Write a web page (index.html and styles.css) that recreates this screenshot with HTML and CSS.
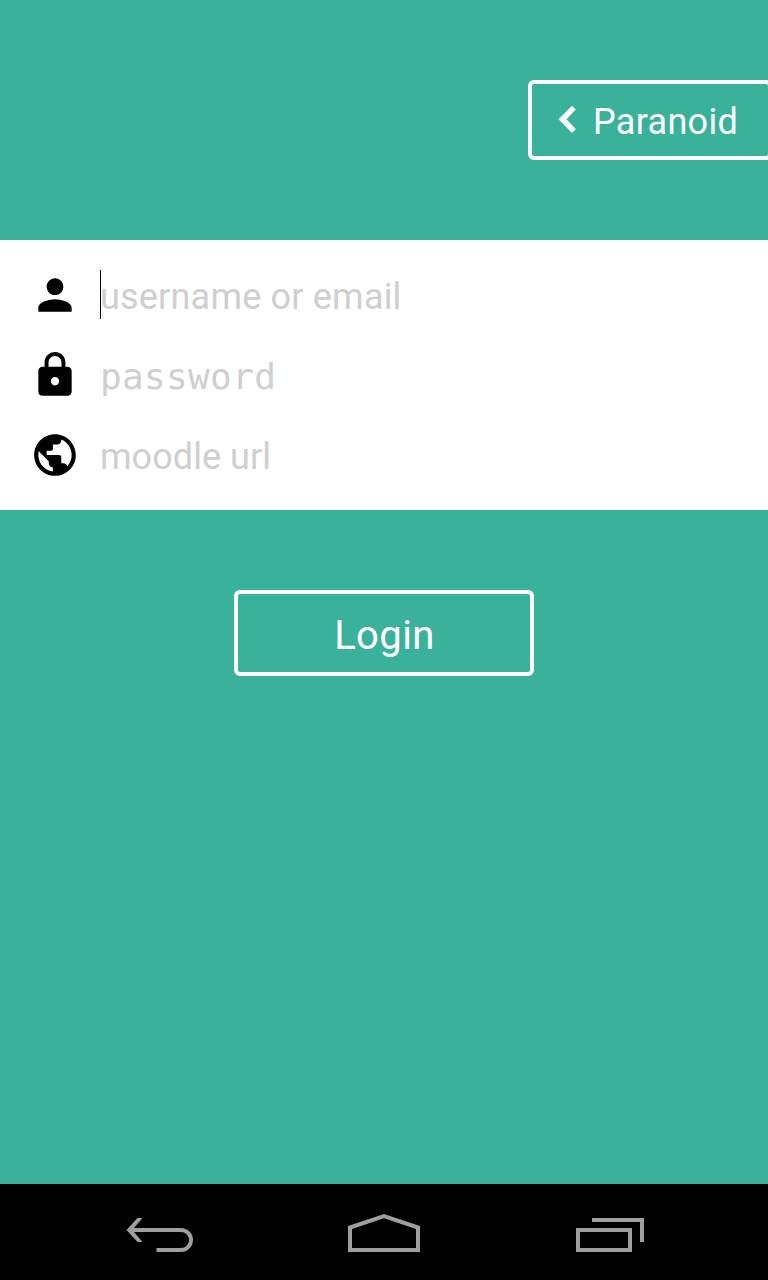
FILE: index.html
```html
<!DOCTYPE html>
<html lang="en">
<head>
<meta charset="utf-8">
<title>Login</title>
<link rel="stylesheet" href="styles.css">
</head>
<body>
<div class="screen">
  <header class="top">
    <div class="mode">
      <svg class="mode-icon" viewBox="0 0 18 28"><path d="M14 .7L17.800 4.500 8.400 14.300l9.400 9.800L14 28 .5 14.300z"/></svg>
      <span class="mode-label">Paranoid</span>
    </div>
  </header>
  <main class="form">
    <div class="row">
      <svg class="icon" viewBox="0 0 24 24"><path d="M12 12c2.21 0 4-1.79 4-4s-1.79-4-4-4-4 1.79-4 4 1.79 4 4 4zm0 2c-2.67 0-8 1.34-8 4v2h16v-2c0-2.66-5.33-4-8-4z"/></svg>
      <div class="field"><span class="caret"></span><span class="hint">username or email</span></div>
    </div>
    <div class="row">
      <svg class="icon" viewBox="0 0 24 24"><path d="M18 8h-1V6c0-2.76-2.24-5-5-5S7 3.24 7 6v2H6c-1.100 0-2 .9-2 2v10c0 1.100.9 2 2 2h12c1.100 0 2-.9 2-2V10c0-1.100-.9-2-2-2zm-6 9c-1.100 0-2-.9-2-2s.9-2 2-2 2 .9 2 2-.9 2-2 2zm3.100-9H8.900V6c0-1.710 1.390-3.100 3.100-3.100s3.100 1.390 3.100 3.100v2z"/></svg>
      <div class="field"><span class="hint-pass">password</span></div>
    </div>
    <div class="row">
      <svg class="icon" viewBox="0 0 24 24"><path d="M12 2C6.480 2 2 6.480 2 12s4.480 10 10 10 10-4.480 10-10S17.520 2 12 2zm-1 17.930c-3.950-.49-7-3.850-7-7.930 0-.62.080-1.210.21-1.790L9 15v1c0 1.100.9 2 2 2v1.930zm6.900-2.540c-.26-.81-1-1.390-1.900-1.390h-1v-3c0-.55-.45-1-1-1H8v-2h2c.55 0 1-.45 1-1V7h2c1.100 0 2-.9 2-2v-.41c2.930 1.190 5 4.060 5 7.410 0 2.080-.8 3.970-2.100 5.390z"/></svg>
      <div class="field"><span class="hint hint-url">moodle url</span></div>
    </div>
  </main>
  <div class="actions"><div class="login"><span class="login-label">Login</span></div></div>
  <nav class="navbar">
    <svg class="nav-icon" viewBox="0 0 160 96"><path d="M51 46H101a10 10 0 0 1 0 20H76.500"/><path class="solid" d="M57.500 34h5L54 44v4l8.500 10h-5L46.500 46z"/></svg>
    <svg class="nav-icon" viewBox="0 0 160 96"><path d="M46 66V43.500L80 32l34 11.500V66z"/></svg>
    <svg class="nav-icon" viewBox="0 0 160 96"><path d="M50 46h52v20H50zM64 36h50v22"/></svg>
  </nav>
</div>
</body>
</html>
```
FILE: styles.css
```css
body {
  margin: 0;
  font-family: Roboto, sans-serif;
}
.screen {
  display: flex;
  flex-direction: column;
  width: 768px;
  height: 1280px;
  background: #3ab19b;
  overflow: hidden;
}
.top {
  display: flex;
  justify-content: flex-end;
  height: 160px;
  padding-top: 80px;
}
.mode {
  box-sizing: border-box;
  display: flex;
  align-items: flex-start;
  flex: none;
  width: 244px;
  height: 80px;
  margin-right: -4px;
  padding-left: 26px;
  border: 4px solid #fff;
  border-radius: 6px;
  color: #fff;
}
.mode-icon {
  width: 18px;
  height: 28px;
  margin: 21px 17px 0 0;
  fill: #fff;
}
.mode-label {
  font-size: 36px;
  letter-spacing: 0.3px;
  line-height: 76px;
}
.form {
  box-sizing: border-box;
  display: flex;
  flex-direction: column;
  gap: 30px;
  height: 270px;
  padding: 30px;
  background: #fff;
}
.row {
  display: flex;
  gap: 20px;
  height: 50px;
}
.icon {
  width: 50px;
  height: 50px;
}
.field {
  display: flex;
  color: #cfcfcf;
  font-size: 36px;
  line-height: 54px;
  white-space: nowrap;
}
.hint {
  letter-spacing: 0.2px;
}
.hint-url {
  letter-spacing: 0.05px;
}
.caret {
  width: 1px;
  height: 49px;
  margin-right: -1px;
  background: #000;
}
.hint-pass {
  font-family: "DejaVu Sans Mono", monospace;
  font-size: 36px;
  letter-spacing: 0.35px;
}
.actions {
  display: flex;
  justify-content: center;
  padding-top: 80px;
}
.login {
  box-sizing: border-box;
  width: 300px;
  height: 86px;
  padding-left: 1px;
  border: 4px solid #fff;
  border-radius: 6px;
  color: #fff;
  font-size: 40px;
  letter-spacing: 0.4px;
  line-height: 83px;
  text-align: center;
}
.navbar {
  display: flex;
  justify-content: center;
  gap: 64px;
  height: 96px;
  margin-top: auto;
  background: #000;
}
.nav-icon {
  width: 160px;
  height: 96px;
  fill: none;
  stroke: #a09fa0;
  stroke-width: 4;
}
.solid {
  fill: #a09fa0;
  stroke: none;
}
```
